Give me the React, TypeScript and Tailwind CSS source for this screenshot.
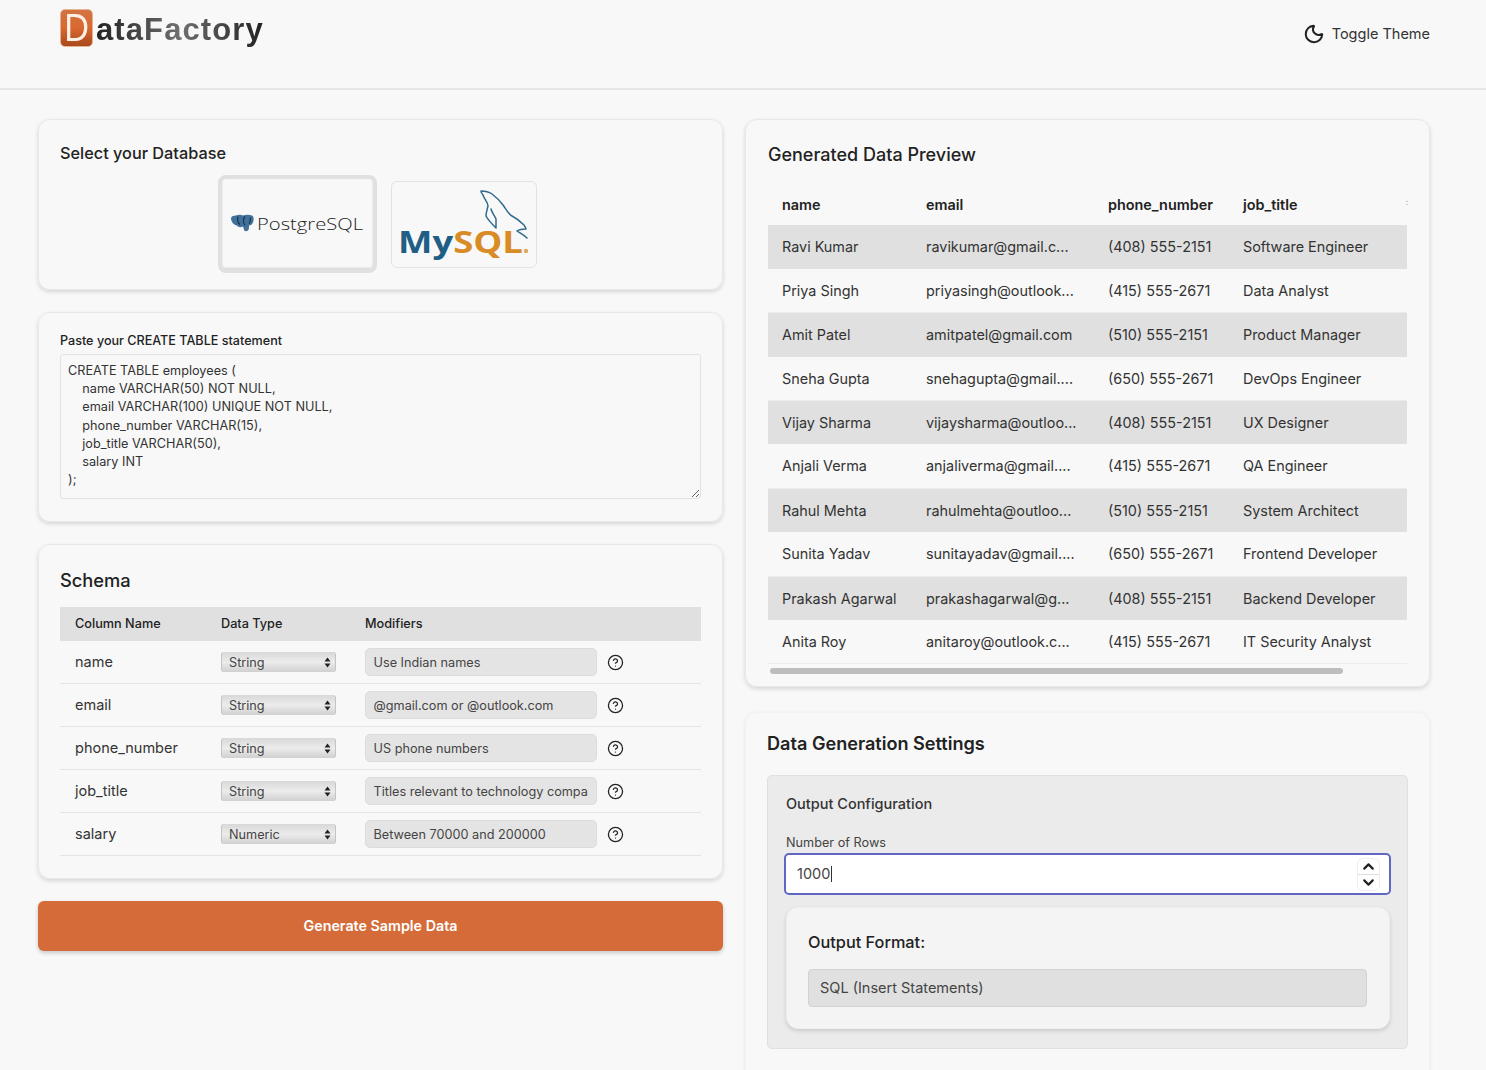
import { Moon, CircleHelp, ChevronUp, ChevronDown } from 'lucide-react';

const schema = [
  { name: 'name', type: 'String', mod: 'Use Indian names' },
  { name: 'email', type: 'String', mod: '@gmail.com or @outlook.com' },
  { name: 'phone_number', type: 'String', mod: 'US phone numbers' },
  { name: 'job_title', type: 'String', mod: 'Titles relevant to technology companies' },
  { name: 'salary', type: 'Numeric', mod: 'Between 70000 and 200000' },
];

const rows = [
  ['Ravi Kumar', 'ravikumar@gmail.c...', '(408) 555-2151', 'Software Engineer'],
  ['Priya Singh', 'priyasingh@outlook...', '(415) 555-2671', 'Data Analyst'],
  ['Amit Patel', 'amitpatel@gmail.com', '(510) 555-2151', 'Product Manager'],
  ['Sneha Gupta', 'snehagupta@gmail....', '(650) 555-2671', 'DevOps Engineer'],
  ['Vijay Sharma', 'vijaysharma@outloo...', '(408) 555-2151', 'UX Designer'],
  ['Anjali Verma', 'anjaliverma@gmail....', '(415) 555-2671', 'QA Engineer'],
  ['Rahul Mehta', 'rahulmehta@outloo...', '(510) 555-2151', 'System Architect'],
  ['Sunita Yadav', 'sunitayadav@gmail....', '(650) 555-2671', 'Frontend Developer'],
  ['Prakash Agarwal', 'prakashagarwal@g...', '(408) 555-2151', 'Backend Developer'],
  ['Anita Roy', 'anitaroy@outlook.c...', '(415) 555-2671', 'IT Security Analyst'],
];

const createTable = `CREATE TABLE employees (
    name VARCHAR(50) NOT NULL,
    email VARCHAR(100) UNIQUE NOT NULL,
    phone_number VARCHAR(15),
    job_title VARCHAR(50),
    salary INT
);`;

function PostgresLogo() {
  return (
    <svg width="150" height="90" viewBox="0 0 150 90">
      <g transform="translate(0 1.5)">
        <path d="M8 38c0-2 2-3 5-3 2-1 5-1 7 0 3-1 6-1 9 0 2 1 2 4 1 7-1 2-2 3-4 3 0 2 0 4-1 5-2 1-4 1-4-1l-1-3c-2 1-5 1-6-1-3 0-6-4-6-7z" fill="#41709a" />
        <path d="M15 36c-1 3 0 7 2 8M22 36c-2 2-2 6 0 9M27 37c1 2 0 5-1 6" fill="none" stroke="#12324b" strokeWidth="1.1" />
      </g>
      <text x="34" y="51" fontFamily="'Open Sans', sans-serif" fontWeight="300" fontSize="15.5" fill="#222222" textLength="106" lengthAdjust="spacingAndGlyphs">PostgreSQL</text>
    </svg>
  );
}

function MysqlLogo() {
  return (
    <svg width="144" height="84" viewBox="0 0 144 84">
      <path d="M89 9c4 0 8 1 11 3 4 3 8 7 11 11 3 4 5 9 9 11 4 2 9 6 12 9 1 2 2 3 2 4-3 0-6 0-9 2 3 2 7 4 10 7M89 9c0 2 1 2 2 4 1 4 5 7 5 11-1 4-2 7-2 10 2 4 6 8 10 12 0-3 0-6 0-9-1-3-4-6-5-10" fill="none" stroke="#2f6a8c" strokeWidth="1.5" strokeLinejoin="round" strokeLinecap="round" />
      <text x="6" y="71" fontFamily="'Open Sans', sans-serif" fontWeight="700" fontSize="30" textLength="125" lengthAdjust="spacingAndGlyphs">
        <tspan fill="#1f5f85">My</tspan>
        <tspan fill="#d98b26">SQL</tspan>
      </text>
      <circle cx="134" cy="69" r="2.2" fill="#e3a860" />
    </svg>
  );
}

export default function App() {
  return (
    <div className="h-screen overflow-hidden bg-[#f8f8f8] font-['Inter',sans-serif] text-[#222222]">
      {/* Header */}
      <header className="h-[90px] border-b-2 border-[#e6e6e6] flex justify-between pl-[60px] pr-[56px]">
        <div className="flex items-start pt-[9px]">
          <div className="w-[33px] h-[38px] rounded-[5px] border border-[#e6b394] bg-gradient-to-b from-[#d27442] via-[#d9682f] to-[#a9491c] flex items-center justify-center">
            <span className="text-[#fdf0e6] text-[38px] leading-[36px] scale-x-90 font-['Liberation_Sans',sans-serif]">D</span>
          </div>
          <span className="mt-[2px] ml-[3px] text-[31px] leading-[38px] font-bold tracking-[1.1px] font-['Liberation_Sans',sans-serif] bg-gradient-to-r from-[#222222] via-[#707070] to-[#222222] bg-clip-text text-transparent">
            ataFactory
          </span>
        </div>
        <div className="flex items-center gap-[7px] h-[67px] text-[14.5px] text-[#333333]">
          <Moon size={22} strokeWidth={2.2} className="text-[#222222]" />
          Toggle Theme
        </div>
      </header>

      <main className="grid grid-cols-[685px_685px] gap-[22px] pl-[38px] pt-[29px]">
        {/* Left column */}
        <div className="flex flex-col gap-[22px]">
          <section className="h-[171px] rounded-xl border border-[#e8e8e8] shadow-[0_2px_4px_rgba(0,0,0,0.14)] px-[21px] pt-[23px]">
            <h2 className="text-[16.3px] leading-5 font-medium">Select your Database</h2>
            <div className="flex items-center justify-center gap-[14px] pr-[6px] mt-[12px]">
              <div className="w-[159px] h-[98px] rounded-lg border-4 border-[#e0e0e0] shadow-[inset_0_-1px_2px_rgba(0,0,0,0.15)] flex items-center justify-center">
                <PostgresLogo />
              </div>
              <div className="w-[146px] h-[87px] rounded-md border border-[#e3e3e3] flex items-center justify-center">
                <MysqlLogo />
              </div>
            </div>
          </section>

          <section className="h-[210px] rounded-xl border border-[#e8e8e8] shadow-[0_2px_4px_rgba(0,0,0,0.14)] px-[21px] pt-[19px]">
            <label className="block text-[12.6px] leading-[18px] font-medium">Paste your CREATE TABLE statement</label>
            <textarea
              readOnly
              value={createTable}
              className="block mt-[4px] w-full h-[145px] rounded-[3px] border border-[#e2e2e2] bg-[#f8f8f8] px-[7px] py-[7px] text-[12.7px] leading-[18.2px] text-[#333333] outline-none resize-y"
            />
          </section>

          <section className="h-[335px] rounded-xl border border-[#e8e8e8] shadow-[0_2px_4px_rgba(0,0,0,0.14)] px-[21px] pt-[23px]">
            <h2 className="text-[18.3px] leading-6 font-medium">Schema</h2>
            <div className="mt-[15px] h-[34px] bg-[#e0e0e0] grid grid-cols-[146px_144px_1fr] items-center pl-[15px] text-[12.7px] font-medium">
              <span>Column Name</span>
              <span>Data Type</span>
              <span>Modifiers</span>
            </div>
            {schema.map((s) => (
              <div key={s.name} className="h-[43px] border-b border-[#e4e4e4] grid grid-cols-[146px_144px_232px_1fr] items-center pl-[15px] text-[14.5px] text-[#333333]">
                <span>{s.name}</span>
                <div className="w-[115px] h-[20px] rounded-[3px] border-x border-[#c4c4c4] bg-gradient-to-b from-[#d8d8d8] via-[#ececec] to-[#d0d0d0] flex items-center justify-between pl-[7px] pr-[4px] pt-px text-[12.7px] text-[#444444]">
                  {s.type}
                  <svg width="7" height="11" viewBox="0 0 7 11" fill="#222222">
                    <path d="M3.5 0.5 6.5 4.5H0.5zM3.5 10.5 0.5 6.5H6.5z" />
                  </svg>
                </div>
                <input
                  readOnly
                  value={s.mod}
                  className="w-[232px] h-[28px] rounded-[5px] border border-[#dcdcdc] bg-[#e4e4e4] pl-[7.5px] pr-2 text-[12.7px] text-[#444444] outline-none"
                />
                <CircleHelp size={17} strokeWidth={1.8} className="ml-[10px] text-[#222222]" />
              </div>
            ))}
          </section>

          <button className="h-[50px] rounded-[6px] bg-[#d46b38] text-white text-[14.3px] font-semibold shadow-[0_2px_4px_rgba(0,0,0,0.2)]">
            Generate Sample Data
          </button>
        </div>

        {/* Right column */}
        <div className="flex flex-col gap-[25px]">
          <section className="h-[568px] rounded-xl border border-[#e8e8e8] shadow-[0_2px_4px_rgba(0,0,0,0.14)] pl-[22px] pr-[22px] pt-[23px]">
            <h2 className="text-[18px] leading-6 font-medium">Generated Data Preview</h2>
            <div className="mt-[17px] w-[639px] relative">
              <table className="w-full table-fixed text-left text-[14.4px] text-[#333333]">
                <colgroup>
                  <col className="w-[158px]" />
                  <col className="w-[182px]" />
                  <col className="w-[135px]" />
                  <col />
                </colgroup>
                <thead>
                  <tr className="h-[41px] text-[14.4px] text-[#222222]">
                    <th className="pl-[14px] font-semibold">name</th>
                    <th className="font-semibold">email</th>
                    <th className="font-semibold">phone_number</th>
                    <th className="font-semibold">job_title</th>
                  </tr>
                </thead>
                <tbody>
                  {rows.map((r, i) => (
                    <tr key={r[0]} className={i % 2 === 0 ? 'h-[43.9px] bg-[#e0e0e0]' : 'h-[43.9px] border-b border-[#ececec]'}>
                      <td className="pl-[14px]">{r[0]}</td>
                      <td>{r[1]}</td>
                      <td>{r[2]}</td>
                      <td>{r[3]}</td>
                    </tr>
                  ))}
                </tbody>
              </table>
              <span className="absolute right-[-1px] top-[14px] text-[8px] leading-none text-[#888888]">:</span>
            </div>
            <div className="mt-[4px] ml-[2px] w-[573px] h-[6px] rounded-full bg-[#bdbdbd]" />
          </section>

          <section className="h-[380px] rounded-xl border border-[#f2f2f2] shadow-[0_1px_4px_rgba(0,0,0,0.07)] px-[21px] pt-[18px]">
            <h2 className="text-[18.1px] leading-6 font-semibold">Data Generation Settings</h2>
            <div className="mt-[20px] h-[274px] rounded-[5px] border border-[#e0e0e0] bg-[#ebebeb] px-[18px] pt-[19px]">
              <h3 className="text-[14.5px] leading-[18px] font-medium text-[#333333]">Output Configuration</h3>
              <label className="block mt-[22px] text-[12.7px] leading-[16px] text-[#444444]">Number of Rows</label>
              <div className="mt-[2px] -mx-[2px] h-[42px] rounded-[5px] border-2 border-[#5f66c4] bg-white flex items-center justify-between pl-[11px] pr-[9px] text-[14.5px] text-[#444444]">
                <span className="border-r border-[#333333] pr-px leading-4">1000</span>
                <div className="w-[23px] h-[33px] rounded-[6px] border border-[#eeeeee] flex flex-col items-center justify-center text-[#222222]">
                  <ChevronUp size={17} strokeWidth={3} className="-my-px" />
                  <div className="w-full h-px bg-[#dddddd]" />
                  <ChevronDown size={17} strokeWidth={3} className="-my-px" />
                </div>
              </div>
              <div className="mt-[12px] -mr-px h-[122px] rounded-xl border border-[#eeeeee] bg-[#f4f4f4] shadow-[0_2px_4px_rgba(0,0,0,0.14)] pl-[21px] pr-[22px] pt-[24px]">
                <h3 className="text-[16.3px] leading-5 font-medium">Output Format:</h3>
                <div className="mt-[17px] h-[38px] rounded-[4px] border border-[#d2d2d2] bg-[#e0e0e0] flex items-center pl-[11px] text-[14.5px] text-[#444444]">
                  SQL (Insert Statements)
                </div>
              </div>
            </div>
          </section>
        </div>
      </main>
    </div>
  );
}
